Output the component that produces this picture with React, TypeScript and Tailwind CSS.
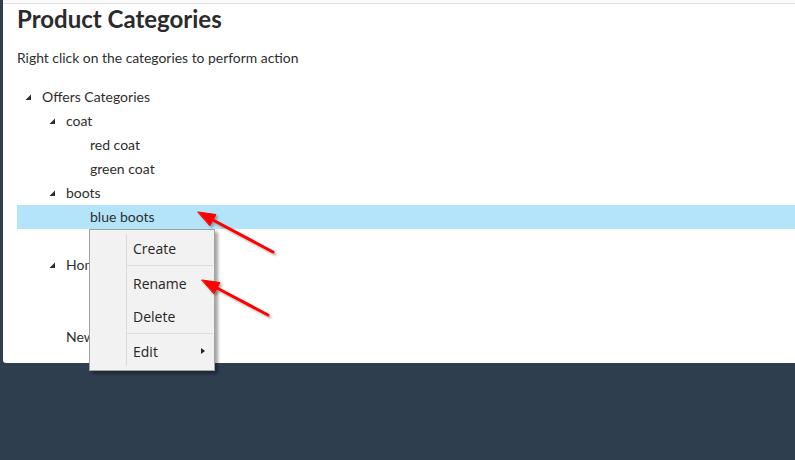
import React from "react";

type Node = { label: string; level: number; expanded?: boolean; selected?: boolean };

const rows: Node[] = [
  { label: "Offers Categories", level: 0, expanded: true },
  { label: "coat", level: 1, expanded: true },
  { label: "red coat", level: 2 },
  { label: "green coat", level: 2 },
  { label: "boots", level: 1, expanded: true },
  { label: "blue boots", level: 2, selected: true },
  { label: "", level: 2 },
  { label: "Home", level: 1, expanded: true },
  { label: "", level: 2 },
  { label: "", level: 2 },
  { label: "New", level: 1 },
];

const indent = ["pl-[8px]", "pl-[32px]", "pl-[56px]"];

function Toggle() {
  return (
    <svg width="6" height="6" viewBox="0 0 6 6" className="shrink-0">
      <polygon points="6,0.5 6,6 0.5,6" fill="#2b2b2b" />
    </svg>
  );
}

function TreeRow({ node }: { node: Node }) {
  return (
    <div
      className={`flex h-[24px] items-center ${indent[node.level]} ${
        node.selected ? "bg-[#b4e4fa]" : ""
      }`}
    >
      <div className="flex w-[17px] items-center">{node.expanded && <Toggle />}</div>
      <span className="text-[14px] leading-[24px] text-[#2e2e2e]">{node.label}</span>
    </div>
  );
}

function ContextMenu() {
  const items = [
    { label: "Create", sep: true },
    { label: "Rename" },
    { label: "Delete", sep: true },
    { label: "Edit", sub: true },
  ];
  return (
    <div className="absolute left-[89px] top-[229px] w-[126px] border border-[#a3a3a3] bg-[#f2f2f2] py-[2px] shadow-[3px_3px_3px_rgba(0,0,0,0.35)] [font-family:'Open_Sans',sans-serif]">
      <div className="flex">
        <div className="w-[36px] shrink-0" />
        <div className="my-[2px] w-px shrink-0 bg-[#dadada]" />
        <div className="flex flex-1 flex-col pr-[1px]">
          {items.map((it) => (
            <div
              key={it.label}
              className={`flex h-[34px] items-center justify-between pl-[6px] pr-[8px] text-[14px] text-[#262626] ${
                it.sep ? "border-b border-[#dcdcdc]" : ""
              }`}
            >
              <span>{it.label}</span>
              {it.sub && (
                <svg width="4" height="6" viewBox="0 0 4 6">
                  <polygon points="0,0 4,3 0,6" fill="#222" />
                </svg>
              )}
            </div>
          ))}
        </div>
      </div>
    </div>
  );
}

function Annotations() {
  return (
    <svg className="pointer-events-none absolute left-0 top-0" width="795" height="460">
      <defs>
        <filter id="sh" x="-20%" y="-20%" width="140%" height="140%">
          <feDropShadow dx="2" dy="2" stdDeviation="1.2" floodColor="#000" floodOpacity="0.3" />
        </filter>
      </defs>
      <g filter="url(#sh)" fill="#ff0000" stroke="#ff0000" strokeLinecap="round">
        <line x1="211" y1="219" x2="273" y2="252" strokeWidth="3" />
        <polygon points="198,212 216,214.5 210,225.5" strokeWidth="1" />
        <line x1="215" y1="287" x2="268" y2="315" strokeWidth="3" />
        <polygon points="202,280 220,282.5 214,293.5" strokeWidth="1" />
      </g>
    </svg>
  );
}

export default function App() {
  return (
    <div className="relative h-[460px] w-[795px] overflow-hidden bg-[#2f3e4f] [font-family:Lato,'Liberation_Sans',sans-serif]">
      <div className="ml-[3px]">
        <div className="h-[3px] bg-[#fbfbfb]" />
        <div className="h-[360px] rounded-bl-[3px] border-t border-[#dedede] bg-white pl-[14px]">
          <h1 className="text-[24px] font-bold leading-[29px] text-[#2b2b2b]">Product Categories</h1>
          <p className="mt-[15px] text-[13.9px] leading-[20px] text-[#2e2e2e]">
            Right click on the categories to perform action
          </p>
          <div className="mt-[17px]">
            {rows.map((n, i) => (
              <TreeRow key={i} node={n} />
            ))}
          </div>
        </div>
      </div>
      <ContextMenu />
      <Annotations />
    </div>
  );
}
